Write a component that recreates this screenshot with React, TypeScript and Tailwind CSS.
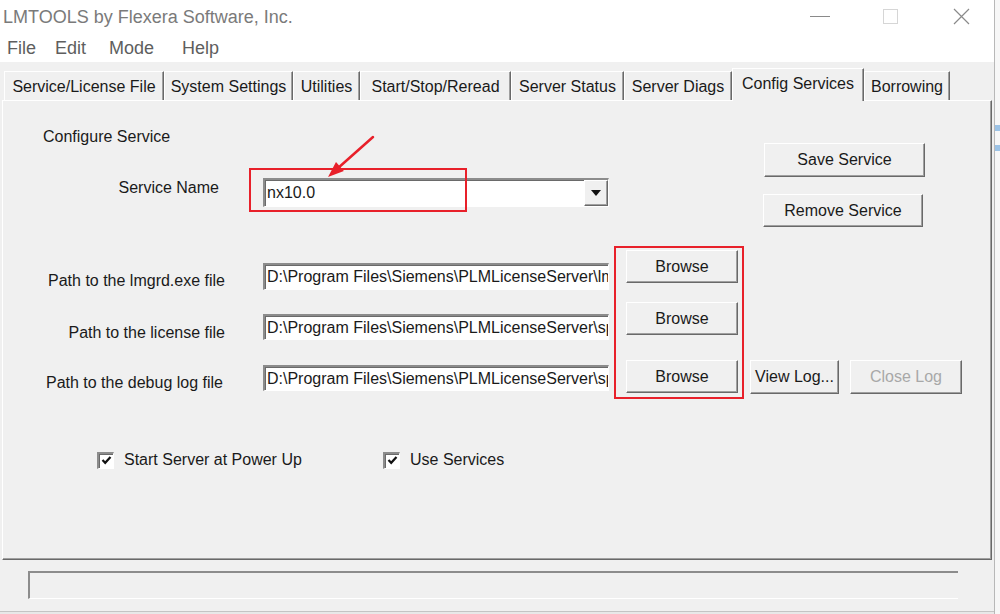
import React from "react";

const tabs = [
  { label: "Service/License File", cls: "w-[160px]" },
  { label: "System Settings", cls: "w-[129px]" },
  { label: "Utilities", cls: "w-[67px]" },
  { label: "Start/Stop/Reread", cls: "w-[151px]" },
  { label: "Server Status", cls: "w-[113px]" },
  { label: "Server Diags", cls: "w-[108px]" },
  { label: "Config Services", cls: "w-[132px]", active: true },
  { label: "Borrowing", cls: "w-[86px]" },
];

const raised =
  "bg-[#f0f0f0] border-t border-l border-t-white border-l-white border-b border-r border-b-[#696969] border-r-[#696969] shadow-[inset_-1px_-1px_0_#a0a0a0] flex items-center justify-center";

const sunken =
  "bg-white border-t-2 border-l-2 border-t-[#8c8c8c] border-l-[#8c8c8c] border-b border-r border-b-white border-r-white shadow-[inset_1px_1px_0_#6a6a6a]";

function Btn({ children, cls, disabled }: { children: React.ReactNode; cls: string; disabled?: boolean }) {
  return (
    <div className={`${raised} ${cls} leading-[18px] ${disabled ? "text-[#a8a8a8]" : "text-[#1a1a1a]"}`}>
      {children}
    </div>
  );
}

function Check({ label }: { label: string }) {
  return (
    <div className="flex items-center">
      <div className={`${sunken} w-[17px] h-[17px] flex items-center justify-center`}>
        <svg width="11" height="11" viewBox="0 0 11 11">
          <path d="M1.5 5 L4.2 7.8 L9.5 2" stroke="#111" strokeWidth="2.2" fill="none" />
        </svg>
      </div>
      <span className="ml-[10px] leading-[18px]">{label}</span>
    </div>
  );
}

function PathInput({ text, cls }: { text: string; cls: string }) {
  return (
    <div className={`${sunken} ${cls} w-[346px] overflow-hidden whitespace-nowrap pl-[2px] flex items-center leading-[18px]`}>
      {text}
    </div>
  );
}

export default function App() {
  return (
    <div className="w-[1000px] h-[614px] overflow-hidden bg-white relative flex font-['Liberation_Sans',Arial,sans-serif] text-[16px] text-[#1a1a1a]">
      {/* window */}
      <div className="w-[995px] h-full flex flex-col border-r border-r-[#b8b8b8]">
        {/* title bar */}
        <div className="h-[33px] flex items-center bg-white">
          <span className="ml-[3px] text-[18px] text-[#7a7a7a] leading-[20px]">LMTOOLS by Flexera Software, Inc.</span>
          <div className="ml-auto flex items-center h-full">
            <div className="w-[20px] h-[1px] bg-[#8a8a8a] mr-[53px]" />
            <div className="w-[15px] h-[15px] border border-[#d6d6d6] mr-[55px]" />
            <svg width="17" height="17" viewBox="0 0 17 17" className="mr-[24px]">
              <path d="M1 1 L16 16 M16 1 L1 16" stroke="#8a8a8a" strokeWidth="1.2" />
            </svg>
          </div>
        </div>
        {/* menu bar */}
        <div className="h-[29px] flex items-center bg-white text-[18px] text-[#5e5e5e] leading-[20px]">
          <span className="ml-[7px] w-[48px]">File</span>
          <span className="w-[54px]">Edit</span>
          <span className="w-[73px]">Mode</span>
          <span>Help</span>
        </div>
        {/* body */}
        <div className="flex-1 bg-[#f0f0f0] flex flex-col">
          {/* tab strip */}
          <div className="h-[38px] flex items-end pl-[4px]">
            {tabs.map((t) =>
              t.active ? (
                <div
                  key={t.label}
                  className={`${t.cls} h-[33px] -mb-[1px] relative z-10 bg-[#f0f0f0] border-t border-l border-t-white border-l-white border-r border-r-[#696969] shadow-[inset_-1px_0_0_#a0a0a0] flex items-start justify-center pt-[6px] leading-[18px]`}
                >
                  {t.label}
                </div>
              ) : (
                <div
                  key={t.label}
                  className={`${t.cls} h-[29px] bg-[#f0f0f0] border-t border-l border-t-white border-l-white border-r border-r-[#696969] shadow-[inset_-1px_0_0_#a0a0a0] flex items-center justify-center pt-[2px] leading-[18px]`}
                >
                  {t.label}
                </div>
              )
            )}
          </div>
          {/* panel */}
          <div className="ml-[2px] w-[990px] h-[460px] border-t border-l border-t-white border-l-white border-r border-b border-r-[#696969] border-b-[#696969] shadow-[inset_-1px_-1px_0_#a0a0a0] flex flex-col">
            {/* section A */}
            <div className="h-[149px] flex">
              <div className="w-[761px] flex flex-col">
                <div className="mt-[27px] ml-[40px] leading-[18px]">Configure Service</div>
                <div className="mt-[32px] flex items-start">
                  <div className="w-[216px] text-right mt-[1px] leading-[18px]">Service Name</div>
                  <div className={`${sunken} ml-[44px] w-[346px] h-[29px] flex items-center`}>
                    <span className="pl-[2px] leading-[18px] flex-1">nx10.0</span>
                    <div className={`${raised} w-[24px] h-full`}>
                      <svg width="10" height="6" viewBox="0 0 10 6">
                        <path d="M0 0 L10 0 L5 6 Z" fill="#111" />
                      </svg>
                    </div>
                  </div>
                </div>
              </div>
              <div className="flex flex-col">
                <Btn cls="mt-[42px] w-[161px] h-[34px]">Save Service</Btn>
                <Btn cls="mt-[17px] -ml-[1px] w-[160px] h-[33px]">Remove Service</Btn>
              </div>
            </div>
            {/* row 1 */}
            <div className="flex items-start">
              <div className="w-[222px] text-right mt-[22px] leading-[18px]">Path to the lmgrd.exe file</div>
              <PathInput cls="ml-[38px] mt-[13px] h-[27px]" text="D:\Program Files\Siemens\PLMLicenseServer\lmgrd.exe" />
              <Btn cls="ml-[17px] w-[112px] h-[33px]">Browse</Btn>
            </div>
            {/* row 2 */}
            <div className="mt-[12px] flex items-start">
              <div className="w-[222px] text-right mt-[22px] leading-[18px]">Path to the license file</div>
              <PathInput cls="ml-[38px] mt-[12px] h-[26px]" text="D:\Program Files\Siemens\PLMLicenseServer\splm8.lic" />
              <Btn cls="ml-[17px] w-[112px] h-[33px]">Browse</Btn>
            </div>
            {/* row 3 */}
            <div className="mt-[18px] flex items-start">
              <div className="w-[220px] text-right mt-[14px] leading-[18px]">Path to the debug log file</div>
              <PathInput cls="ml-[40px] mt-[5px] h-[26px]" text="D:\Program Files\Siemens\PLMLicenseServer\splm_ugslmd.log" />
              <Btn cls="ml-[17px] w-[112px] h-[33px]">Browse</Btn>
              <Btn cls="ml-[12px] w-[89px] h-[34px]">View Log...</Btn>
              <Btn cls="ml-[11px] w-[112px] h-[34px]" disabled>
                Close Log
              </Btn>
            </div>
            {/* checkboxes */}
            <div className="mt-[57px] flex items-center">
              <div className="ml-[94px] w-[286px]">
                <Check label="Start Server at Power Up" />
              </div>
              <Check label="Use Services" />
            </div>
          </div>
          {/* status area */}
          <div className="flex-1 flex flex-col">
            <div className="mt-[11px] ml-[28px] w-[930px] h-[28px] bg-[#f0f0f0] border-t-2 border-l-2 border-t-[#8c8c8c] border-l-[#8c8c8c] border-b border-b-white" />
            <div className="mt-auto h-[3px] border-t border-t-[#c4c4c4] bg-[#e8e8e8]" />
          </div>
        </div>
      </div>
      {/* background window strip */}
      <div className="flex-1 h-full bg-[#f7f7f7] flex flex-col">
        <div className="mt-[125px] h-[6px] bg-[#9cc3e6]" />
        <div className="mt-[14px] h-[6px] bg-[#9cc3e6]" />
      </div>

      {/* annotations */}
      <div className="absolute left-[249px] top-[168px] w-[218px] h-[44px] border-2 border-[#e8202a] pointer-events-none" />
      <div className="absolute left-[614px] top-[246px] w-[130px] h-[153px] border-2 border-[#e8202a] pointer-events-none" />
      <svg className="absolute left-[320px] top-[130px] pointer-events-none" width="60" height="55" viewBox="0 0 60 55">
        <line x1="53" y1="7" x2="19.5" y2="36.8" stroke="#e8202a" strokeWidth="2.5" strokeLinecap="round" />
        <polygon points="8,47 23.9,40.9 16,31.9" fill="#e8202a" />
      </svg>
    </div>
  );
}
